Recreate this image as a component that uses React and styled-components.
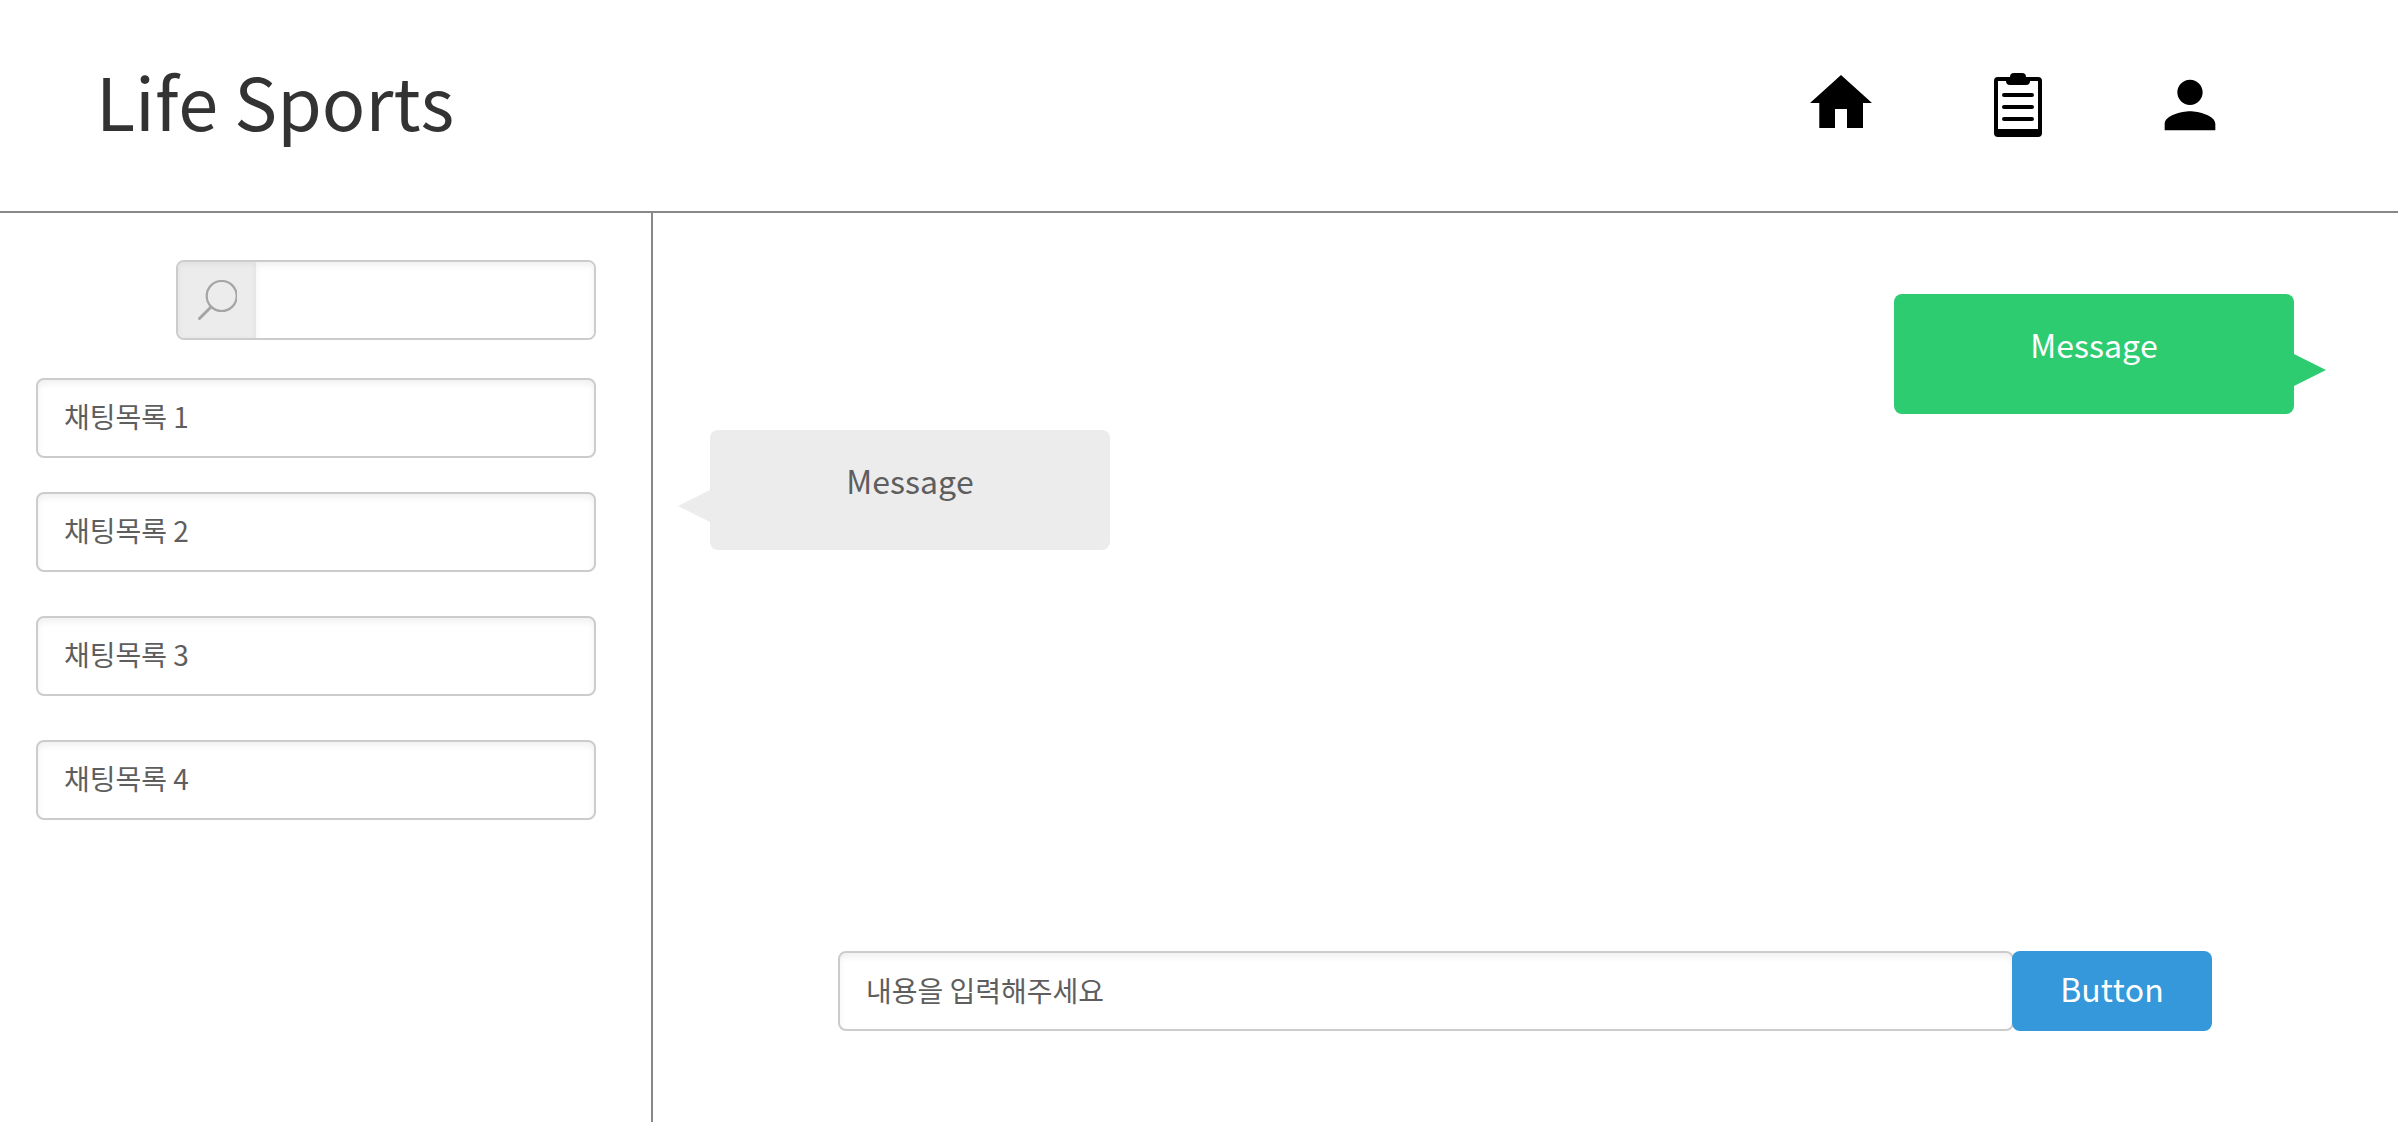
import React, { useState } from 'react';
import styled, { createGlobalStyle } from 'styled-components';
import { MdPerson } from 'react-icons/md';

const GlobalStyle = createGlobalStyle`
  * {
    box-sizing: border-box;
  }

  body {
    margin: 0;
    background: #fff;
    color: #5e5e5e;
    font-family: "Noto Sans CJK KR", "Noto Sans", sans-serif;
    font-kerning: none;
  }

  button, input {
    font-family: inherit;
    font-kerning: inherit;
  }
`;

const Page = styled.div`
  min-height: 100vh;
  padding: 0 2px 2px 0;
  display: flex;
  flex-direction: column;
`;

const Header = styled.header`
  min-height: 213px;
  padding: 0 170px 1px 96px;
  display: flex;
  justify-content: space-between;
  align-items: center;
  border-bottom: 2px solid #888;
`;

const Logo = styled.h1`
  margin: 0;
  padding-bottom: 10px;
  color: #333;
  font-size: 72px;
  font-weight: 400;
  line-height: 104px;
`;

const Nav = styled.nav`
  display: flex;
  align-items: center;
  gap: 110px;
`;

const NavLink = styled.a`
  display: flex;
  color: #000;
`;

const Body = styled.div`
  flex: 1;
  display: flex;
`;

const Sidebar = styled.aside`
  flex: 0 0 653px;
  padding: 47px 55px 0 36px;
  display: flex;
  flex-direction: column;
  border-right: 2px solid #888;
`;

const SearchBox = styled.label`
  width: 420px;
  height: 80px;
  margin-bottom: 38px;
  align-self: flex-end;
  display: flex;
  overflow: hidden;
  border: 2px solid #ccc;
  border-radius: 8px;
`;

const SearchIcon = styled.span`
  flex: 0 0 78px;
  display: flex;
  justify-content: center;
  align-items: center;
  background: #ececec;
  box-shadow: inset 0 2px 6px rgba(0, 0, 0, 0.06);
`;

const SearchInput = styled.input`
  flex: 1;
  min-width: 0;
  padding: 0 26px;
  border: 0;
  outline: 0;
  color: #5e5e5e;
  font-size: 28px;
  box-shadow: inset 0 4px 6px rgba(0, 0, 0, 0.06);
`;

const ChatList = styled.ul`
  margin: 0;
  padding: 0;
  list-style: none;
`;

const ChatItem = styled.li`
  margin-bottom: 44px;

  &:first-child {
    margin-bottom: 34px;
  }
`;

const ChatButton = styled.button`
  width: 100%;
  height: 80px;
  padding: 0 26px 4px;
  border: 2px solid #ccc;
  border-radius: 8px;
  background: #fff;
  color: #5e5e5e;
  font-size: 28px;
  line-height: 40px;
  text-align: left;
  box-shadow: inset 0 4px 6px rgba(0, 0, 0, 0.06);
  cursor: pointer;
`;

const Room = styled.main`
  flex: 1;
  min-width: 0;
  display: flex;
  flex-direction: column;
  justify-content: space-between;
`;

const Messages = styled.div`
  padding: 81px 104px 0 57px;
  display: flex;
  flex-direction: column;
  gap: 16px;
`;

const Bubble = styled.div`
  position: relative;
  width: 400px;
  height: 120px;
  padding-top: 26px;
  align-self: ${({ $mine }) => ($mine ? 'flex-end' : 'flex-start')};
  border-radius: 8px;
  background: ${({ $mine }) => ($mine ? '#2ecc71' : '#ececec')};
  color: ${({ $mine }) => ($mine ? '#fff' : '#5e5e5e')};
  font-size: 32px;
  line-height: 48px;
  text-align: center;

  &::after {
    content: '';
    position: absolute;
    top: 60px;
    ${({ $mine }) => ($mine ? 'left: 100%;' : 'right: 100%;')}
    border-style: solid;
    border-width: ${({ $mine }) => ($mine ? '16px 0 16px 32px' : '16px 32px 16px 0')};
    border-color: transparent ${({ $mine }) => ($mine ? 'transparent' : '#ececec')}
      transparent ${({ $mine }) => ($mine ? '#2ecc71' : 'transparent')};
  }
`;

const Composer = styled.form`
  padding: 0 186px 91px 185px;
  display: flex;
`;

const MessageInput = styled.input`
  flex: 1;
  min-width: 0;
  height: 80px;
  padding: 0 26px 2px;
  border: 2px solid #ccc;
  border-radius: 8px;
  outline: 0;
  color: #5e5e5e;
  font-size: 28px;
  box-shadow: inset 0 4px 6px rgba(0, 0, 0, 0.06);

  &::placeholder {
    color: #5e5e5e;
    opacity: 1;
  }
`;

const SendButton = styled.button`
  flex: 0 0 200px;
  height: 80px;
  margin-left: -2px;
  padding: 0 0 6px;
  border: 0;
  border-radius: 8px;
  background: #3498db;
  color: #fff;
  font-size: 32px;
  line-height: 48px;
  cursor: pointer;
`;

const HomeIcon = () => (
  <svg width="74" height="80" viewBox="0 0 74 80" aria-hidden="true">
    <path d="M37 10L68 38H59V63H43V44H31V63H15.3V38H6z" />
  </svg>
);

const ClipboardIcon = () => (
  <svg width="54" height="64" viewBox="-6 0 54 64" aria-hidden="true">
    <path
      fillRule="evenodd"
      d="M4 4H44a4 4 0 0 1 4 4V60a4 4 0 0 1-4 4H4a4 4 0 0 1-4-4V8a4 4 0 0 1 4-4zM4 8V56H44V8z"
    />
    <path d="M20 0h8a4 4 0 0 1 4 4h4v4a4 4 0 0 1-4 4H16a4 4 0 0 1-4-4V4h4a4 4 0 0 1 4-4z" />
    <path d="M10 22H38M10 34H38M10 46H38" stroke="#000" strokeWidth="4" strokeLinecap="round" />
  </svg>
);

const Magnifier = () => (
  <svg width="40" height="40" viewBox="0 0 40 40" fill="none" stroke="#a5a5a5" aria-hidden="true">
    <circle cx="24.7" cy="16" r="15" strokeWidth="2.2" />
    <path d="M14 27L2.5 38.5" strokeWidth="3" strokeLinecap="round" />
  </svg>
);

const chats = ['채팅목록 1', '채팅목록 2', '채팅목록 3', '채팅목록 4'];

const App = () => {
  const [keyword, setKeyword] = useState('');
  const [text, setText] = useState('');
  const [messages, setMessages] = useState([
    { body: 'Message', mine: true },
    { body: 'Message', mine: false },
  ]);

  const handleSubmit = (e) => {
    e.preventDefault();
    if (!text) return;
    setMessages([...messages, { body: text, mine: true }]);
    setText('');
  };

  return (
    <Page>
      <GlobalStyle />
      <Header>
        <Logo>Life Sports</Logo>
        <Nav>
          <NavLink href="#home" aria-label="홈">
            <HomeIcon />
          </NavLink>
          <NavLink href="#board" aria-label="게시판">
            <ClipboardIcon />
          </NavLink>
          <NavLink href="#profile" aria-label="프로필">
            <MdPerson size={76} />
          </NavLink>
        </Nav>
      </Header>
      <Body>
        <Sidebar>
          <SearchBox>
            <SearchIcon>
              <Magnifier />
            </SearchIcon>
            <SearchInput
              aria-label="채팅 검색"
              value={keyword}
              onChange={(e) => setKeyword(e.target.value)}
            />
          </SearchBox>
          <ChatList>
            {chats.filter((chat) => chat.includes(keyword)).map((chat) => (
              <ChatItem key={chat}>
                <ChatButton type="button">{chat}</ChatButton>
              </ChatItem>
            ))}
          </ChatList>
        </Sidebar>
        <Room>
          <Messages>
            {messages.map((message, index) => (
              <Bubble key={index} $mine={message.mine}>{message.body}</Bubble>
            ))}
          </Messages>
          <Composer onSubmit={handleSubmit}>
            <MessageInput
              aria-label="메시지"
              placeholder="내용을 입력해주세요"
              value={text}
              onChange={(e) => setText(e.target.value)}
            />
            <SendButton type="submit">Button</SendButton>
          </Composer>
        </Room>
      </Body>
    </Page>
  );
};

export default App;
